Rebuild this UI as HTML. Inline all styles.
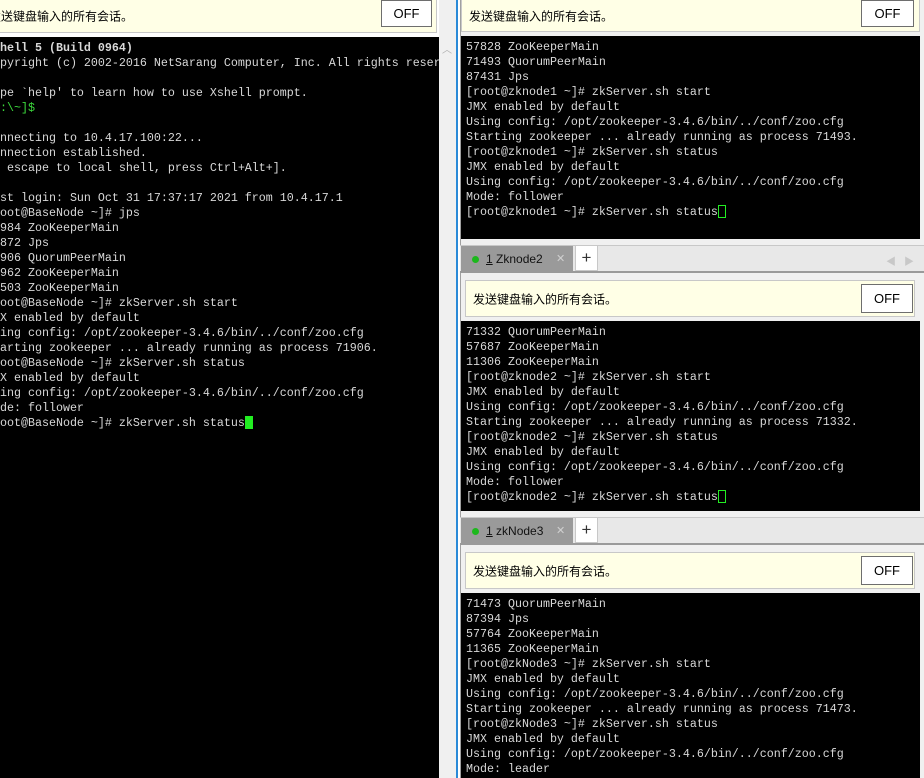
<!DOCTYPE html>
<html><head><meta charset="utf-8"><style>
*{margin:0;padding:0;box-sizing:border-box}
body{width:924px;height:778px;position:relative;overflow:hidden;background:#f0f0f0;font-family:"Liberation Sans","Noto Sans CJK SC",sans-serif}
.abs{position:absolute}
.term{position:absolute;background:#000;overflow:hidden}
.term pre{position:absolute;font-family:"Liberation Mono","DejaVu Sans Mono",monospace;font-size:11.67px;line-height:15px;color:#d8d8d8;white-space:pre}
.bar{position:absolute;background:#ffffe6;border:1px solid #c8c8c8;font-size:12px;color:#000}
.bar span{position:absolute;left:7px;top:50%;transform:translateY(-50%)}
.off{position:absolute;background:#fff;border:1px solid #6e6e6e;font-size:13px;text-align:center;color:#000}
.g{color:#3cd83c}
.tabbar{position:absolute;left:460px;width:464px;height:28px;background:#e8e8e8;border-top:1px solid #c8c8c8;border-bottom:2px solid #9a9a9a}
.tab{position:absolute;left:1px;top:0;width:112px;height:26px;background:#9a9a9a;font-size:12px;color:#111}
.tab .dot{position:absolute;left:11px;top:10px;width:7px;height:7px;border-radius:50%;background:#1cb81c}
.tab .t{position:absolute;left:25px;top:6px}
.tab .x{position:absolute;left:95px;top:6px;color:#d0d0d0;font-size:11px}
.plus{position:absolute;left:115px;top:-1px;width:23px;height:26px;background:#fff;border:1px solid #c8c8c8;text-align:center;font-size:17px;line-height:24px;color:#333}
.arr{position:absolute;top:7px;color:#c8c8c8;font-size:10px}
.cur{display:inline-block;width:8px;height:13px;vertical-align:-3px}
</style></head><body>
<!-- left panel -->
<div class="abs" style="left:0;top:0;width:439px;height:37px;background:#fff"></div>
<div class="bar" style="left:-2px;top:-1px;width:439px;height:34px"><span style="left:-10px">发送键盘输入的所有会话。</span></div>
<div class="off" style="left:381px;top:0;width:51px;height:27px;line-height:25px">OFF</div>
<div class="term" style="left:0;top:37px;width:439px;height:741px">
<pre style="left:-14px;top:4px"><b>Xshell 5 (Build 0964)</b>
Copyright (c) 2002-2016 NetSarang Computer, Inc. All rights reserved.

Type `help' to learn how to use Xshell prompt.
<span class="g">[c:\~]$</span>

Connecting to 10.4.17.100:22...
Connection established.
To escape to local shell, press Ctrl+Alt+].

Last login: Sun Oct 31 17:37:17 2021 from 10.4.17.1
[root@BaseNode ~]# jps
71984 ZooKeeperMain
71872 Jps
71906 QuorumPeerMain
11962 ZooKeeperMain
11503 ZooKeeperMain
[root@BaseNode ~]# zkServer.sh start
JMX enabled by default
Using config: /opt/zookeeper-3.4.6/bin/../conf/zoo.cfg
Starting zookeeper ... already running as process 71906.
[root@BaseNode ~]# zkServer.sh status
JMX enabled by default
Using config: /opt/zookeeper-3.4.6/bin/../conf/zoo.cfg
Mode: follower
[root@BaseNode ~]# zkServer.sh status<span class="cur" style="background:#22ee22"></span></pre>
</div>
<div class="abs" style="left:439px;top:37px;width:17px;height:741px;background:#f0f0f0"></div>
<div class="abs" style="left:442px;top:41px;color:#b0b0b0;font-size:10px">︿</div>
<div class="abs" style="left:456px;top:0;width:2px;height:778px;background:#2a8ad8"></div>
<div class="abs" style="left:458px;top:0;width:3px;height:778px;background:#fff"></div>
<div class="abs" style="left:460px;top:0;width:1px;height:778px;background:#a0a0a0"></div>

<!-- right panel 1 -->
<div class="bar" style="left:461px;top:-1px;width:459px;height:33px"><span>发送键盘输入的所有会话。</span></div>
<div class="off" style="left:861px;top:0;width:53px;height:27px;line-height:25px">OFF</div>
<div class="term" style="left:461px;top:36px;width:459px;height:203px">
<pre style="left:5px;top:4px">57828 ZooKeeperMain
71493 QuorumPeerMain
87431 Jps
[root@zknode1 ~]# zkServer.sh start
JMX enabled by default
Using config: /opt/zookeeper-3.4.6/bin/../conf/zoo.cfg
Starting zookeeper ... already running as process 71493.
[root@zknode1 ~]# zkServer.sh status
JMX enabled by default
Using config: /opt/zookeeper-3.4.6/bin/../conf/zoo.cfg
Mode: follower
[root@zknode1 ~]# zkServer.sh status<span class="cur" style="border:1px solid #22ee22"></span></pre>
</div>

<!-- tab 2 -->
<div class="tabbar" style="top:245px"><div class="tab"><div class="dot"></div><div class="t"><u>1</u> Zknode2</div><div class="x">✕</div></div><div class="plus">+</div><div class="arr" style="left:426px">◀</div><div class="arr" style="left:444px">▶</div></div>
<div class="bar" style="left:465px;top:280px;width:450px;height:37px"><span>发送键盘输入的所有会话。</span></div>
<div class="off" style="left:861px;top:284px;width:52px;height:29px;line-height:27px">OFF</div>
<div class="term" style="left:461px;top:321px;width:459px;height:190px">
<pre style="left:5px;top:4px">71332 QuorumPeerMain
57687 ZooKeeperMain
11306 ZooKeeperMain
[root@zknode2 ~]# zkServer.sh start
JMX enabled by default
Using config: /opt/zookeeper-3.4.6/bin/../conf/zoo.cfg
Starting zookeeper ... already running as process 71332.
[root@zknode2 ~]# zkServer.sh status
JMX enabled by default
Using config: /opt/zookeeper-3.4.6/bin/../conf/zoo.cfg
Mode: follower
[root@zknode2 ~]# zkServer.sh status<span class="cur" style="border:1px solid #22ee22"></span></pre>
</div>

<!-- tab 3 -->
<div class="tabbar" style="top:517px"><div class="tab"><div class="dot"></div><div class="t"><u>1</u> zkNode3</div><div class="x">✕</div></div><div class="plus">+</div></div>
<div class="bar" style="left:465px;top:552px;width:450px;height:37px"><span>发送键盘输入的所有会话。</span></div>
<div class="off" style="left:861px;top:556px;width:52px;height:29px;line-height:27px">OFF</div>
<div class="term" style="left:461px;top:593px;width:459px;height:185px">
<pre style="left:5px;top:4px">71473 QuorumPeerMain
87394 Jps
57764 ZooKeeperMain
11365 ZooKeeperMain
[root@zkNode3 ~]# zkServer.sh start
JMX enabled by default
Using config: /opt/zookeeper-3.4.6/bin/../conf/zoo.cfg
Starting zookeeper ... already running as process 71473.
[root@zkNode3 ~]# zkServer.sh status
JMX enabled by default
Using config: /opt/zookeeper-3.4.6/bin/../conf/zoo.cfg
Mode: leader</pre>
</div>
</body></html>
